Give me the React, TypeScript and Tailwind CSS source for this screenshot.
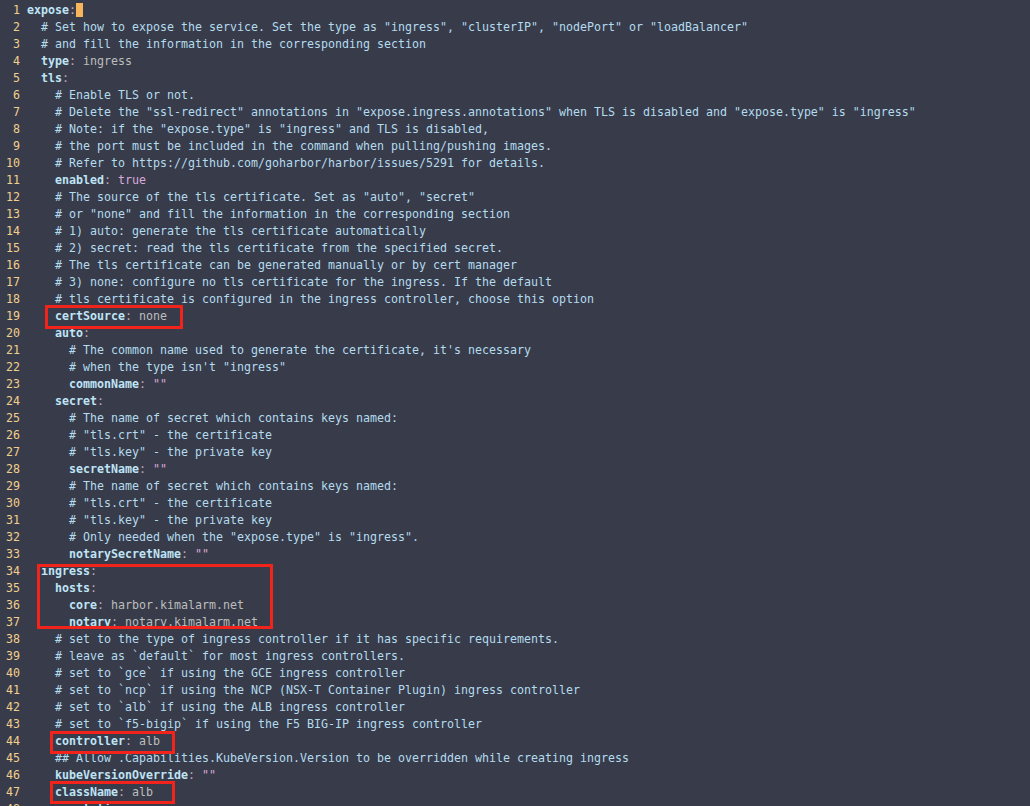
const lines = [
  "expose:",
  '  # Set how to expose the service. Set the type as "ingress", "clusterIP", "nodePort" or "loadBalancer"',
  "  # and fill the information in the corresponding section",
  "  type: ingress",
  "  tls:",
  "    # Enable TLS or not.",
  '    # Delete the "ssl-redirect" annotations in "expose.ingress.annotations" when TLS is disabled and "expose.type" is "ingress"',
  '    # Note: if the "expose.type" is "ingress" and TLS is disabled,',
  "    # the port must be included in the command when pulling/pushing images.",
  "    # Refer to https://github.com/goharbor/harbor/issues/5291 for details.",
  "    enabled: true",
  '    # The source of the tls certificate. Set as "auto", "secret"',
  '    # or "none" and fill the information in the corresponding section',
  "    # 1) auto: generate the tls certificate automatically",
  "    # 2) secret: read the tls certificate from the specified secret.",
  "    # The tls certificate can be generated manually or by cert manager",
  "    # 3) none: configure no tls certificate for the ingress. If the default",
  "    # tls certificate is configured in the ingress controller, choose this option",
  "    certSource: none",
  "    auto:",
  "      # The common name used to generate the certificate, it's necessary",
  '      # when the type isn\'t "ingress"',
  '      commonName: ""',
  "    secret:",
  "      # The name of secret which contains keys named:",
  '      # "tls.crt" - the certificate',
  '      # "tls.key" - the private key',
  '      secretName: ""',
  "      # The name of secret which contains keys named:",
  '      # "tls.crt" - the certificate',
  '      # "tls.key" - the private key',
  '      # Only needed when the "expose.type" is "ingress".',
  '      notarySecretName: ""',
  "  ingress:",
  "    hosts:",
  "      core: harbor.kimalarm.net",
  "      notary: notary.kimalarm.net",
  "    # set to the type of ingress controller if it has specific requirements.",
  "    # leave as `default` for most ingress controllers.",
  "    # set to `gce` if using the GCE ingress controller",
  "    # set to `ncp` if using the NCP (NSX-T Container Plugin) ingress controller",
  "    # set to `alb` if using the ALB ingress controller",
  "    # set to `f5-bigip` if using the F5 BIG-IP ingress controller",
  "    controller: alb",
  "    ## Allow .Capabilities.KubeVersion.Version to be overridden while creating ingress",
  '    kubeVersionOverride: ""',
  "    className: alb",
  "    annotations:",
];

// red highlight boxes drawn over the editor
const boxes = [
  "left-[45px] top-[305px] w-[138px] h-[24px]",
  "left-[37px] top-[564px] w-[236px] h-[65px]",
  "left-[50px] top-[731px] w-[125px] h-[23px]",
  "left-[50px] top-[781px] w-[125px] h-[23px]",
];

function Line({ text, first }: { text: string; first: boolean }) {
  const indent = text.match(/^\s*/)?.[0] ?? "";
  const rest = text.slice(indent.length);

  if (rest.startsWith("#")) {
    return (
      <span>
        {indent}
        <span className="text-[#b4dbee]">{rest}</span>
      </span>
    );
  }

  const m = rest.match(/^([\w]+)(:)(\s?)(.*)$/);
  if (!m) return <span>{text}</span>;
  const [, key, colon, sp, value] = m;
  const pink = value === "true" || value === '""';

  return (
    <span>
      {indent}
      <span className="font-bold text-[#bfe4f6]">{key}</span>
      <span className="text-[#c3a7bd]">{colon}</span>
      {sp}
      <span className={pink ? "text-[#d9a9dc]" : "text-[#bdbdbd]"}>{value}</span>
      {first && (
        <span className="inline-block w-[7px] h-[14px] bg-[#f6b55a] align-[-3px]" />
      )}
    </span>
  );
}

export default function App() {
  return (
    <div
      className="relative h-[806px] w-[1030px] overflow-hidden bg-[#383c4a] pt-[2px] text-[11.63px] leading-[17px] text-[#b4dbee]"
      style={{ fontFamily: '"DejaVu Sans Mono", monospace' }}
    >
      {lines.map((l, i) => (
        <div key={i} className="flex whitespace-pre">
          <span className="ml-[6px] w-[14px] text-right text-[#f2cf8c]">{i + 1}</span>
          <span className="ml-[7px]">
            <Line text={l} first={i === 0} />
          </span>
        </div>
      ))}

      {boxes.map((b) => (
        <div key={b} className={`absolute border-[3px] border-[#f2231b] ${b}`} />
      ))}
    </div>
  );
}
